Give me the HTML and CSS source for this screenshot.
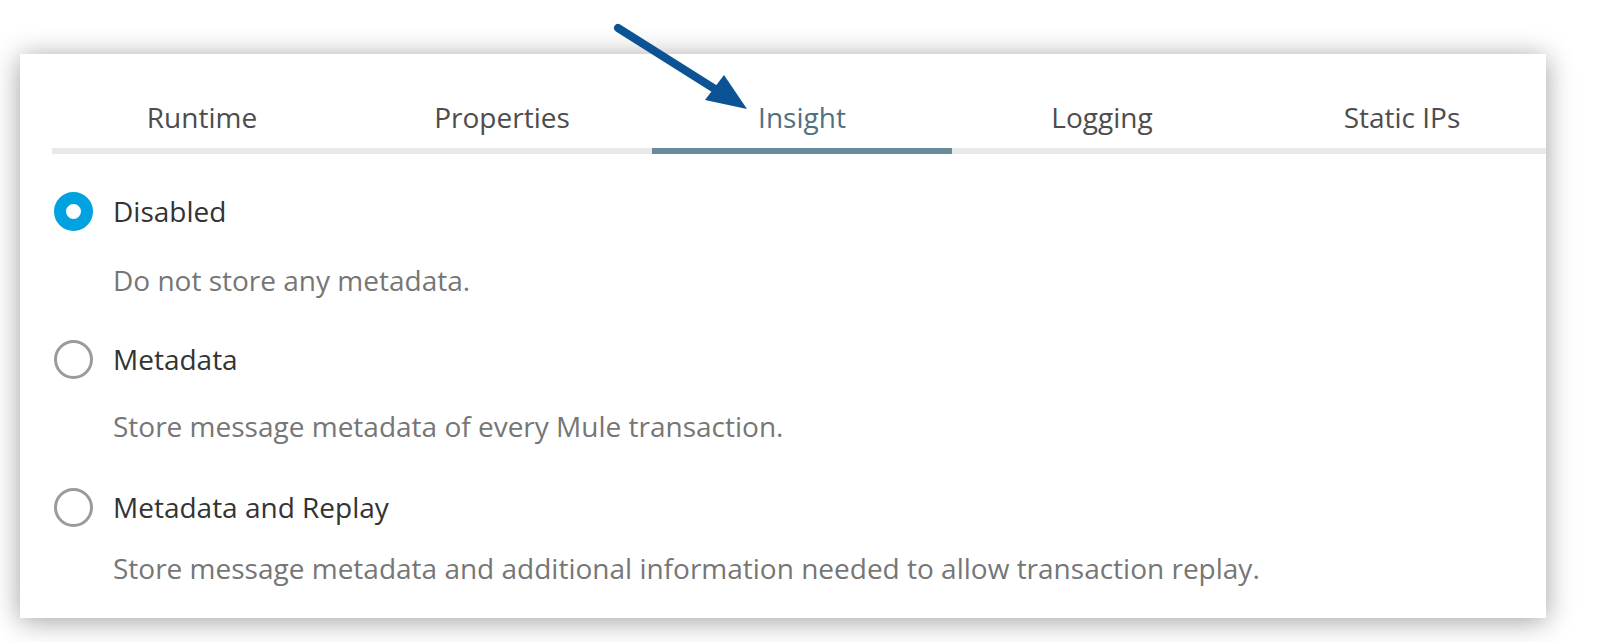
FILE: index.html
```html
<!DOCTYPE html>
<html lang="en">
<head>
<meta charset="utf-8">
<title>Insight settings</title>
<link rel="stylesheet" href="styles.css">
</head>
<body>
<div class="card">
  <nav class="tabs">
    <div class="tab">Runtime</div>
    <div class="tab">Properties</div>
    <div class="tab active">Insight</div>
    <div class="tab">Logging</div>
    <div class="tab">Static IPs</div>
  </nav>
  <div class="options">
    <div class="option first">
      <div class="label-row"><span class="radio checked"></span><span class="label">Disabled</span></div>
      <div class="desc">Do not store any metadata.</div>
    </div>
    <div class="option">
      <div class="label-row"><span class="radio"></span><span class="label">Metadata</span></div>
      <div class="desc">Store message metadata of every Mule transaction.</div>
    </div>
    <div class="option last">
      <div class="label-row"><span class="radio"></span><span class="label">Metadata and Replay</span></div>
      <div class="desc">Store message metadata and additional information needed to allow transaction replay.</div>
    </div>
  </div>
</div>
<svg class="arrow" width="1618" height="140" viewBox="0 0 1618 140" xmlns="http://www.w3.org/2000/svg">
  <line x1="618" y1="28" x2="718" y2="91" stroke="#0b5394" stroke-width="8" stroke-linecap="round"/>
  <polygon points="747,109 705,100 724,75" fill="#0b5394"/>
</svg>
</body>
</html>
```

FILE: styles.css
```css
html, body {
  margin: 0;
  padding: 0;
  background: #ffffff;
}
body {
  position: relative;
  width: 1618px;
  height: 642px;
  overflow: hidden;
  padding: 54px 0 0 20px;
  box-sizing: border-box;
  font-family: "Open Sans", "Liberation Sans", sans-serif;
}
.card {
  width: 1526px;
  height: 564px;
  background: #ffffff;
  box-shadow: 0 3px 26px rgba(0, 0, 0, 0.38);
  padding-left: 32px;
  box-sizing: border-box;
  overflow: hidden;
}
.tabs {
  display: flex;
}
.tab {
  flex: 0 0 300px;
  text-align: center;
  font-size: 28px;
  line-height: 38px;
  color: #4d4d4d;
  padding: 44px 0 12px;
  border-bottom: 6px solid #e8e9ea;
}
.tab.active {
  color: #50707f;
  border-bottom-color: #698a99;
}
.options {
  display: flex;
  flex-direction: column;
  padding-left: 2px;
}
.option {
  margin-top: 41px;
}
.option.first {
  margin-top: 37px;
}
.option.last {
  margin-top: 43px;
}
.label-row {
  display: flex;
  align-items: center;
  height: 40px;
}
.radio {
  width: 39px;
  height: 39px;
  box-sizing: border-box;
  border-radius: 50%;
  border: 3px solid #9b9b9b;
  background: #fff;
  flex: none;
}
.radio.checked {
  border: 12px solid #00a2df;
}
.label {
  margin-left: 20px;
  font-size: 28px;
  line-height: 38px;
  color: #333333;
}
.desc {
  margin-top: 29px;
  padding-left: 59px;
  font-size: 28px;
  line-height: 36px;
  color: #767676;
}
.option.first .desc {
  margin-top: 31px;
}
.option.last .desc {
  margin-top: 23px;
}
.arrow {
  position: absolute;
  left: 0;
  top: 0;
}
```
